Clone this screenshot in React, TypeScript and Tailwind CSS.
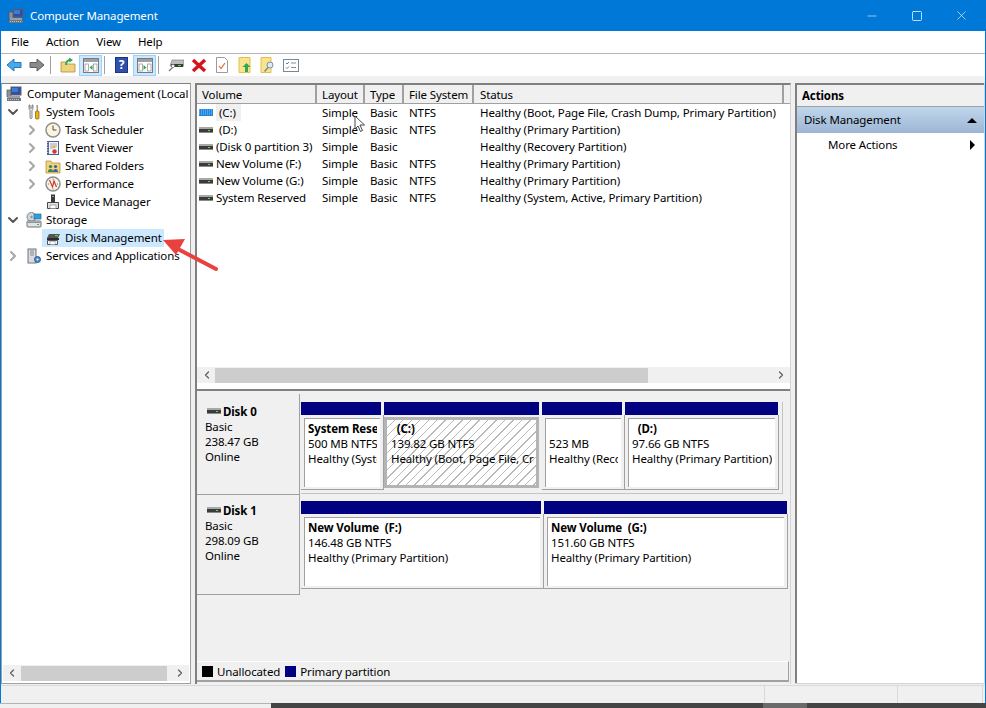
import React from 'react'
import { ChevronDown, ChevronRight, ChevronLeft, Minus, Square, X } from 'lucide-react'

function Ico({ children, className }: { children: React.ReactNode; className?: string }) {
  return (
    <svg viewBox="0 0 16 16" width="16" height="16" className={className ?? 'shrink-0'} fill="none">
      {children}
    </svg>
  )
}

function ComputerIcon() {
  return (
    <Ico>
      <rect x="5" y="1" width="10" height="8" fill="#3b4a9c" stroke="#59606e" />
      <rect x="6" y="2" width="6" height="4" fill="#2f7fdc" />
      <rect x="1" y="4" width="4" height="7" fill="#8d929a" stroke="#555" strokeWidth="0.7" />
      <rect x="2" y="10" width="12" height="2" fill="#9a9ea6" />
      <rect x="1" y="12" width="14" height="3" fill="#70757d" />
      <path d="M2 13.5h12" stroke="#d5d7da" strokeWidth="0.8" strokeDasharray="1 1" />
    </Ico>
  )
}

function ToolsIcon() {
  return (
    <Ico>
      <path d="M3 1v3c0 1 .5 2 1 2.500V14c0 .8 2 .8 2 0V6.500c.5-.5 1-1.500 1-2.500V1L6 1v3H4V1z" fill="#e6e6e6" stroke="#6f6f6f" strokeWidth="0.8" />
      <rect x="10.500" y="1" width="1.500" height="6" fill="#9a9a9a" />
      <rect x="9.500" y="7" width="3.500" height="8" rx="1" fill="#eeb111" stroke="#7d5c06" strokeWidth="0.7" />
    </Ico>
  )
}

function ClockIcon() {
  return (
    <Ico>
      <circle cx="8" cy="8" r="7" fill="#fbf5df" stroke="#8f8f8f" strokeWidth="1.500" />
      <path d="M8 3.500V8h3.500" stroke="#4a4a4a" strokeWidth="1" />
    </Ico>
  )
}

function EventIcon() {
  return (
    <Ico>
      <rect x="2" y="1" width="12" height="14" fill="#4a5f9e" />
      <rect x="4" y="2" width="9" height="12" fill="#f4f4f4" />
      <path d="M5 4h7M5 6h7M5 8h3" stroke="#8890a8" strokeWidth="0.8" />
      <path d="M2 2.5h1.4M2 5h1.4M2 7.5h1.4M2 10h1.4M2 12.5h1.4" stroke="#d9d9d9" strokeWidth="0.8" />
      <path d="M9 5l2 3H7z" fill="#e8bd23" />
      <circle cx="9.5" cy="11.5" r="2.2" fill="#cf3a3a" />
    </Ico>
  )
}

function SharedIcon() {
  return (
    <Ico>
      <path d="M1 3h5l1 2h8v10H1z" fill="#eed27d" stroke="#b9963a" strokeWidth="0.8" />
      <circle cx="5.5" cy="8.5" r="1.6" fill="#3f7f52" />
      <path d="M3 14c0-2 1-3 2.5-3S8 12 8 14z" fill="#3f7f52" />
      <circle cx="10.5" cy="8.5" r="1.6" fill="#3c5fa8" />
      <path d="M8 14c0-2 1-3 2.5-3s2.5 1 2.5 3z" fill="#3c5fa8" />
    </Ico>
  )
}

function PerfIcon() {
  return (
    <Ico>
      <circle cx="8" cy="8" r="7" fill="#f5f2e8" stroke="#8f8f8f" strokeWidth="1.500" />
      <path d="M4.500 4l3 7 1.500-6 2.500 6" stroke="#d23b2f" strokeWidth="1.200" />
      <path d="M8 2.500v1M13 8h-1M8 13.500v-1M3 8h1" stroke="#555" strokeWidth="0.8" />
    </Ico>
  )
}

function DeviceIcon() {
  return (
    <Ico>
      <rect x="6" y="0.500" width="4" height="7.500" fill="#3a3a3a" />
      <rect x="7" y="2" width="2" height="1" fill="#9a9a9a" />
      <path d="M2.500 8.500h11v6h-11z" fill="#e4e4e4" stroke="#444" strokeWidth="1" />
      <rect x="5" y="11" width="6" height="3.500" fill="#fff" stroke="#777" strokeWidth="0.6" />
    </Ico>
  )
}

function StorageIcon() {
  return (
    <Ico>
      <circle cx="5.500" cy="5" r="4.500" fill="#cfd6dc" stroke="#7f8a92" />
      <circle cx="5.500" cy="5" r="1.200" fill="#8a949c" />
      <rect x="8" y="2" width="7" height="5" fill="#2f9fd9" stroke="#2b6e96" strokeWidth="0.7" />
      <rect x="1" y="9" width="14" height="6" rx="1" fill="#dfe3e4" stroke="#6b7274" />
      <rect x="2" y="10" width="12" height="1" fill="#8e9698" />
      <rect x="11" y="12" width="2" height="1" fill="#3fb54a" />
    </Ico>
  )
}

function DiskMgmtIcon() {
  return (
    <Ico>
      <path d="M4 4h11l-2 4H2z" fill="#555" />
      <rect x="10" y="5" width="3" height="1.200" fill="#5fd23f" />
      <rect x="2" y="8" width="12" height="2" fill="#2d2d2d" />
      <path d="M2.500 10.500h10v4h-10z" fill="#f6f6f6" stroke="#444" strokeWidth="0.9" />
      <rect x="5" y="11.500" width="5" height="3" fill="#fff" stroke="#888" strokeWidth="0.5" />
    </Ico>
  )
}

function ServicesIcon() {
  return (
    <Ico>
      <rect x="2" y="1" width="8" height="14" fill="#d8dce0" stroke="#70767c" />
      <path d="M4 3h4M4 5h4M4 7h4" stroke="#70767c" strokeWidth="0.8" />
      <circle cx="11.5" cy="11.5" r="3" fill="#4f87c4" stroke="#2f5c90" />
      <circle cx="11.5" cy="11.5" r="1" fill="#fff" />
    </Ico>
  )
}

function DriveIcon({ blue }: { blue?: boolean }) {
  return (
    <svg viewBox="0 0 16 8" width="16" height="8" className="shrink-0" fill="none">
      {blue ? (
        <>
          <rect x="1" y="0" width="14" height="7" fill="#1f86e0" />
          <path d="M1 1h14M1 3h14M1 5h14" stroke="#9fd0f7" strokeWidth="0.8" strokeDasharray="1 1" />
        </>
      ) : (
        <>
          <rect x="1" y="1" width="14" height="2" fill="#a8a8a8" />
          <rect x="1" y="3" width="14" height="3" fill="#3b3b3b" />
          <rect x="10" y="4" width="2" height="1" fill="#5fe03f" />
          <rect x="1" y="6" width="14" height="1" fill="#8a8a8a" />
        </>
      )}
    </svg>
  )
}

function PaneIcon({ side }: { side: 'left' | 'right' }) {
  return (
    <svg viewBox="0 0 16 15" width="16" height="15" fill="none">
      <rect x="0.5" y="0.5" width="15" height="14" fill="#fff" stroke="#7a7a7a" />
      <rect x="1" y="1" width="14" height="3" fill="#9aa0a6" />
      <rect x="2" y="6" width="3.5" height="7" fill="#fff" stroke="#8a8a8a" strokeWidth="0.7" />
      <rect x="10.5" y="6" width="3.5" height="7" fill="#fff" stroke="#8a8a8a" strokeWidth="0.7" />
      <path d={side === 'left' ? 'M9.5 7v5L6.5 9.5z' : 'M6.5 7v5l3-2.5z'} fill="#2fa84f" />
    </svg>
  )
}

function Sep() {
  return (
    <div className="w-[8px] h-[18px] pl-[2px] shrink-0">
      <div className="w-px h-full bg-[#a0a0a0]" />
    </div>
  )
}

function ToolBtn({ children, on }: { children: React.ReactNode; on?: boolean }) {
  return (
    <div
      className={
        on
          ? 'w-[23px] h-[21px] flex items-center justify-center shrink-0 bg-[#cce8ff] border border-[#99d1ff]'
          : 'w-[23px] h-[21px] flex items-center justify-center shrink-0'
      }
    >
      {children}
    </div>
  )
}

function Toolbar() {
  return (
    <div className="h-[22px] bg-white flex items-center pl-[1px] shrink-0">
      <ToolBtn>
        <svg viewBox="0 0 16 14" width="16" height="14">
          <path d="M8 1L1 7l7 6V9.5h7v-5H8z" fill="#4aa8e8" stroke="#2377bd" />
        </svg>
      </ToolBtn>
      <ToolBtn>
        <svg viewBox="0 0 16 14" width="16" height="14">
          <path d="M8 1l7 6-7 6V9.5H1v-5h7z" fill="#8a8a8a" stroke="#5f5f5f" />
        </svg>
      </ToolBtn>
      <Sep />
      <ToolBtn>
        <svg viewBox="0 0 16 16" width="16" height="16" fill="none">
          <path d="M1 5h5l1 2h8v8H1z" fill="#eed27d" stroke="#b08f3a" strokeWidth="0.8" />
          <path d="M6 8c0-3 2-5 5-5" stroke="#2fa84f" strokeWidth="1.8" />
          <path d="M9 0.5l4 2.5-3.500 2.500z" fill="#2fa84f" />
        </svg>
      </ToolBtn>
      <ToolBtn on>
        <PaneIcon side="left" />
      </ToolBtn>
      <Sep />
      <ToolBtn>
        <div className="w-[13px] h-[16px] bg-[#2f4fae] border border-[#1d3480] flex items-center justify-center text-white text-[12px] font-bold leading-none">
          ?
        </div>
      </ToolBtn>
      <ToolBtn on>
        <PaneIcon side="right" />
      </ToolBtn>
      <Sep />
      <ToolBtn>
        <svg viewBox="0 0 16 14" width="16" height="14" fill="none">
          <path d="M4 2h12v6H2z" fill="#bcbcbc" stroke="#777" strokeWidth="0.6" />
          <rect x="3" y="6" width="12" height="3" fill="#3a3a3a" />
          <rect x="10" y="7" width="3" height="1" fill="#5fe03f" />
          <path d="M1 13l4-4" stroke="#777" strokeWidth="1.2" />
          <circle cx="5" cy="8" r="1.600" fill="#fff" stroke="#777" strokeWidth="0.6" />
        </svg>
      </ToolBtn>
      <ToolBtn>
        <svg viewBox="0 0 16 16" width="16" height="16">
          <path d="M2 3l12 11M14 3L2 14" stroke="#d8121a" strokeWidth="3.400" />
        </svg>
      </ToolBtn>
      <ToolBtn>
        <svg viewBox="0 0 14 16" width="14" height="16" fill="none">
          <path d="M1.500 0.500h8l3 3v12h-11z" fill="#fff" stroke="#9a9a9a" />
          <path d="M4 9l2 2.500L10 6" stroke="#e2643a" strokeWidth="1.200" />
        </svg>
      </ToolBtn>
      <ToolBtn>
        <svg viewBox="0 0 14 16" width="14" height="16" fill="none">
          <path d="M1 0.500h11v15H1z" fill="#fbe38e" stroke="#e3c04d" />
          <path d="M8.500 6l4 4H10v5H7v-5H4.500z" fill="#2fa84f" />
        </svg>
      </ToolBtn>
      <ToolBtn>
        <svg viewBox="0 0 15 16" width="15" height="16" fill="none">
          <path d="M1 0.500h10v15H1z" fill="#fbe38e" stroke="#e3c04d" />
          <circle cx="10" cy="8" r="3" fill="#d6ecfa" stroke="#7a8fa3" />
          <path d="M8 10.500L4.500 14.500" stroke="#7a8fa3" strokeWidth="1.600" />
        </svg>
      </ToolBtn>
      <ToolBtn>
        <svg viewBox="0 0 16 13" width="16" height="13" fill="none">
          <rect x="0.500" y="0.500" width="15" height="12" fill="#fff" stroke="#7d8790" />
          <path d="M3 4l1 1 2-2M3 8.500l1 1 2-2" stroke="#3f86c4" />
          <path d="M8 4h5M8 8.500h5" stroke="#8a8a8a" />
        </svg>
      </ToolBtn>
    </div>
  )
}

const TREE = [
  { label: 'Computer Management (Local', icon: <ComputerIcon />, pad: 'pl-[4px]', gap: 'ml-[5px]' },
  { label: 'System Tools', icon: <ToolsIcon />, pad: 'pl-[6px]', gap: 'ml-[4px]', open: true, arrow: true },
  { label: 'Task Scheduler', icon: <ClockIcon />, pad: 'pl-[25px]', gap: 'ml-[4px]', arrow: true },
  { label: 'Event Viewer', icon: <EventIcon />, pad: 'pl-[25px]', gap: 'ml-[4px]', arrow: true },
  { label: 'Shared Folders', icon: <SharedIcon />, pad: 'pl-[25px]', gap: 'ml-[4px]', arrow: true },
  { label: 'Performance', icon: <PerfIcon />, pad: 'pl-[25px]', gap: 'ml-[4px]', arrow: true },
  { label: 'Device Manager', icon: <DeviceIcon />, pad: 'pl-[43px]', gap: 'ml-[4px]' },
  { label: 'Storage', icon: <StorageIcon />, pad: 'pl-[6px]', gap: 'ml-[4px]', open: true, arrow: true },
  { label: 'Disk Management', icon: <DiskMgmtIcon />, pad: 'pl-[40px]', gap: 'ml-[4px]', selected: true },
  { label: 'Services and Applications', icon: <ServicesIcon />, pad: 'pl-[6px]', gap: 'ml-[4px]', arrow: true },
]

function Tree() {
  return (
    <div className="w-[190px] shrink-0 bg-white border border-[#a0a0a0] border-t-[#808080] flex flex-col overflow-hidden">
      <div className="flex-1 pt-[1px]">
        {TREE.map(t => (
          <div key={t.label} className={`h-[18px] flex items-center whitespace-nowrap ${t.pad}`}>
            {t.arrow &&
              (t.open ? (
                <ChevronDown className="w-[16px] h-[16px] ml-[-3px] mr-[5px] shrink-0 text-[#555]" strokeWidth={3} />
              ) : (
                <ChevronRight className="w-[16px] h-[16px] ml-[-3px] mr-[5px] shrink-0 text-[#a6a6a6]" strokeWidth={3} />
              ))}
            {t.selected ? (
              <div className="flex items-center h-[18px] pl-[3px] pr-[2px] bg-[#cce8ff]">
                {t.icon}
                <span className={t.gap}>{t.label}</span>
              </div>
            ) : (
              <>
                {t.icon}
                <span className={t.gap}>{t.label}</span>
              </>
            )}
          </div>
        ))}
      </div>
      <div className="h-[16px] mb-[2px] mx-[1px] flex items-center bg-[#f0f0f0] shrink-0">
        <ChevronLeft className="w-[12px] h-[12px] ml-[3px] mr-[3px] text-[#606060]" strokeWidth={2.500} />
        <div className="w-[146px] h-[15px] bg-[#cdcdcd]" />
        <ChevronRight className="w-[12px] h-[12px] ml-[7px] text-[#606060]" strokeWidth={2.500} />
      </div>
    </div>
  )
}

const COLS = [
  { label: 'Volume', w: 'w-[120px]', pad: 'pl-[5px]' },
  { label: 'Layout', w: 'w-[48px]', pad: 'pl-[5px]' },
  { label: 'Type', w: 'w-[39px]', pad: 'pl-[5px]' },
  { label: 'File System', w: 'w-[70px]', pad: 'pl-[5px]' },
  { label: 'Status', w: 'w-[310px]', pad: 'pl-[6px]' },
]

const ROWS = [
  { name: '(C:)', blue: true, indent: true, fs: 'NTFS', status: 'Healthy (Boot, Page File, Crash Dump, Primary Partition)' },
  { name: '(D:)', indent: true, fs: 'NTFS', status: 'Healthy (Primary Partition)' },
  { name: '(Disk 0 partition 3)', fs: '', status: 'Healthy (Recovery Partition)' },
  { name: 'New Volume (F:)', fs: 'NTFS', status: 'Healthy (Primary Partition)' },
  { name: 'New Volume (G:)', fs: 'NTFS', status: 'Healthy (Primary Partition)' },
  { name: 'System Reserved', fs: 'NTFS', status: 'Healthy (System, Active, Primary Partition)' },
]

function VolumeTable() {
  return (
    <div className="h-[304px] flex flex-col shrink-0 bg-white">
      <div className="h-[19px] flex shrink-0 bg-[#f0f0f0] border-b border-[#a0a0a0]">
        {COLS.map(c => (
          <div key={c.label} className={`${c.w} ${c.pad} shrink-0 pt-[1px] border-r-2 border-[#a0a0a0] leading-[17px] whitespace-nowrap`}>
            {c.label}
          </div>
        ))}
      </div>
      <div className="flex-1">
        {ROWS.map(r => (
          <div key={r.name} className="h-[17px] flex items-center whitespace-nowrap leading-[17px]">
            <div className="w-[120px] shrink-0 flex items-center pl-[1px]">
              <DriveIcon blue={r.blue} />
              {r.indent ? (
                <span className={r.blue ? 'ml-[2px] pl-[3px] pr-[5px] bg-[#f0f0f0]' : 'ml-[2px] pl-[3px]'}>{r.name}</span>
              ) : (
                <span className="ml-[2px]">{r.name}</span>
              )}
            </div>
            <div className="w-[48px] shrink-0 pl-[5px]">Simple</div>
            <div className="w-[39px] shrink-0 pl-[5px]">Basic</div>
            <div className="w-[70px] shrink-0 pl-[5px]">{r.fs}</div>
            <div className="pl-[6px]">{r.status}</div>
          </div>
        ))}
      </div>
      <div className="h-[16px] flex items-center bg-[#f0f0f0] shrink-0 mb-[6px]">
        <ChevronLeft className="w-[12px] h-[12px] ml-[4px] mr-[2px] text-[#606060]" strokeWidth={2.500} />
        <div className="w-[433px] h-[15px] bg-[#cdcdcd]" />
        <div className="flex-1" />
        <ChevronRight className="w-[12px] h-[12px] mr-[3px] text-[#606060]" strokeWidth={2.500} />
      </div>
    </div>
  )
}

function Partition({ w, title, size, health, selected, last }: { w: string; title?: string; size: string; health: string; selected?: boolean; last?: boolean }) {
  return (
    <div className={`${w} shrink-0 flex flex-col`}>
      <div className={last ? 'h-[13px] mr-[1px] bg-[#000080] shrink-0' : 'h-[13px] mr-[3px] bg-[#000080] shrink-0'} />
      {selected ? (
        <div className="flex-1 min-h-0 pt-[2px] pr-[3px] pb-[2px] flex">
          <div className="flex-1 min-w-0 border-[3px] border-[#b4b4b4] bg-[repeating-linear-gradient(135deg,#fff_0px,#fff_5px,#b9b9b9_5px,#b9b9b9_6px)] pl-[4px] pr-[2px] pt-[1px]">
            <div className="overflow-hidden whitespace-pre leading-[15px]">
              <div className="h-[15px] font-bold">{title}</div>
              <div>{size}</div>
              <div>{health}</div>
            </div>
          </div>
        </div>
      ) : (
        <div className="flex-1 min-h-0 pt-[3px] pl-[3px] pr-[3px] pb-[2px] flex border-b border-r border-[#a0a0a0]">
          <div className="flex-1 min-w-0 border-t border-l border-[#a0a0a0] bg-white pl-[3px] pr-[3px] pt-[2px]">
            <div className="overflow-hidden whitespace-pre leading-[15px]">
              <div className="h-[15px] font-bold">{title}</div>
              <div>{size}</div>
              <div>{health}</div>
            </div>
          </div>
        </div>
      )}
    </div>
  )
}

function DiskLabel({ name, size, second }: { name: string; size: string; second?: boolean }) {
  return (
    <div className={second ? 'w-[103px] shrink-0 border-r border-b border-[#a0a0a0] pl-[8px] pt-[7px] leading-[15px]' : 'w-[103px] shrink-0 border-r border-b border-[#a0a0a0] pl-[8px] pt-[9px] leading-[15px]'}>
      <div className="flex items-center h-[16px] font-bold pl-px">
        <DriveIcon />
        <span className="ml-px">{name}</span>
      </div>
      <div>Basic</div>
      <div>{size}</div>
      <div>Online</div>
    </div>
  )
}

function DiskArea() {
  return (
    <div className="flex-1 flex flex-col bg-[#f0f0f0] border-t-2 border-[#808080] pt-[3px] min-h-0">
      <div className="h-[101px] flex shrink-0">
        <DiskLabel name="Disk 0" size="238.47 GB" />
        <div className="flex pl-[1px] pt-[8px] pb-[1px]">
          <div className="flex border-r border-b border-[#c4c4c4] pr-[3px] pb-[3px]">
            <Partition w="w-[83px]" title="System Reserved" size="500 MB NTFS" health="Healthy (System, Active, Primary Partition)" />
            <Partition w="w-[158px]" title="  (C:)" size="139.82 GB NTFS" health="Healthy (Boot, Page File, Crash Dump, Primary Partition)" selected />
            <Partition w="w-[83px]" size="523 MB" health="Healthy (Recovery Partition)" />
            <Partition w="w-[154px]" title="  (D:)" size="97.66 GB NTFS" health="Healthy (Primary Partition)" last />
          </div>
        </div>
      </div>
      <div className="h-[100px] flex shrink-0">
        <DiskLabel name="Disk 1" size="298.09 GB" second />
        <div className="flex pl-[1px] pt-[6px] pb-[6px]">
          <Partition w="w-[243px]" title="New Volume  (F:)" size="146.48 GB NTFS" health="Healthy (Primary Partition)" />
          <Partition w="w-[244px]" title="New Volume  (G:)" size="151.60 GB NTFS" health="Healthy (Primary Partition)" last />
        </div>
      </div>
      <div className="flex-1" />
      <div className="h-[21px] mb-[2px] pt-[1px] shrink-0 border-t border-white flex items-center pl-[5px] border-r border-b-2 border-r-[#a0a0a0] border-b-[#a0a0a0] mr-[1px]">
        <div className="w-[11px] h-[11px] bg-black shrink-0" />
        <span className="ml-[4px]">Unallocated</span>
        <div className="w-[11px] h-[11px] bg-[#000080] ml-[5px] shrink-0" />
        <span className="ml-[4px]">Primary partition</span>
      </div>
    </div>
  )
}

function Actions() {
  return (
    <div className="flex-1 min-w-0 bg-white border-l-2 border-t-2 border-[#808080] flex flex-col">
      <div className="h-[22px] bg-[#f0f0f0] pl-[5px] font-bold leading-[21px] border-b border-[#a0a0a0] shrink-0">Actions</div>
      <div className="h-[26px] bg-gradient-to-b from-[#c0d6ec] to-[#9db6d4] flex items-center pl-[7px] pr-[7px] shrink-0">
        <span className="flex-1">Disk Management</span>
        <div className="w-0 h-0 border-x-[5px] border-x-transparent border-b-[5px] border-b-black" />
      </div>
      <div className="h-[24px] flex items-center pl-[31px] pr-[9px]">
        <span className="flex-1">More Actions</span>
        <div className="w-0 h-0 border-y-[5px] border-y-transparent border-l-[5px] border-l-black" />
      </div>
    </div>
  )
}

export default function App() {
  return (
    <div className="relative w-[986px] h-[708px] overflow-hidden flex flex-col bg-[#f0f0f0] text-[11.5px] tracking-[-0.12px] leading-[16px] text-black font-['Noto_Sans',sans-serif]">
      <div className="h-[31px] bg-[#0078d7] text-white flex items-center pl-[8px] shrink-0">
        <ComputerIcon />
        <span className="ml-[6px] flex-1">Computer Management</span>
        <div className="w-[45px] flex justify-center">
          <Minus className="w-[14px] h-[14px]" strokeWidth={1} />
        </div>
        <div className="w-[45px] flex justify-center">
          <Square className="w-[12px] h-[12px]" strokeWidth={1.500} />
        </div>
        <div className="w-[47px] pr-[2px] flex justify-center">
          <X className="w-[15px] h-[15px]" strokeWidth={1} />
        </div>
      </div>

      <div className="flex-1 flex flex-col border-x border-[#0078d7] min-h-0">
        <div className="h-[23px] bg-white border-b border-[#b4b4b4] flex items-center pl-[3px] shrink-0 gap-[3px]">
          {['File', 'Action', 'View', 'Help'].map(m => (
            <span key={m} className="px-[7px]">{m}</span>
          ))}
        </div>
        <Toolbar />
        <div className="flex-1 flex pt-[7px] pb-[1px] gap-[4px] min-h-0">
          <Tree />
          <div className="flex-1 min-w-0 flex flex-col border-l-2 border-t-2 border-r border-[#808080] border-r-[#d4d4d4]">
            <VolumeTable />
            <DiskArea />
          </div>
          <div className="w-[190px] shrink-0 flex border-r border-b border-[#d4d4d4]">
            <Actions />
          </div>
        </div>
        <div className="h-[18px] shrink-0 flex border-t border-[#d9d9d9]">
          <div className="w-[764px] border-r border-[#d9d9d9]" />
          <div className="w-[133px] border-r border-[#d9d9d9]" />
          <div className="w-[85px] border-r border-[#d9d9d9]" />
        </div>
      </div>

      <div className="h-[5px] shrink-0 flex">
        <div className="w-[271px] bg-[#f0f0f0] border-t border-[#b4b4b4]" />
        <div className="w-[492px] bg-[#444444]" />
        <div className="w-[44px] bg-[#6a6a6a]" />
        <div className="flex-1 bg-[#444444]" />
      </div>

      {/* annotation arrow and mouse pointer, both sit over the screenshot */}
      <svg className="absolute left-[160px] top-[235px]" width="60" height="40" viewBox="0 0 60 40" fill="none">
        <path d="M56 34L16 13" stroke="#e8413f" strokeWidth="4" strokeLinecap="round" />
        <path d="M3 5l22-1-9 16z" fill="#e8413f" />
      </svg>
      <svg className="absolute left-[354px] top-[115px]" width="12" height="18" viewBox="0 0 12 18">
        <path d="M1 1v13l3-3 2.500 5.500 2-1L6 10h4.500z" fill="#fff" stroke="#333" strokeWidth="0.9" />
      </svg>
    </div>
  )
}
